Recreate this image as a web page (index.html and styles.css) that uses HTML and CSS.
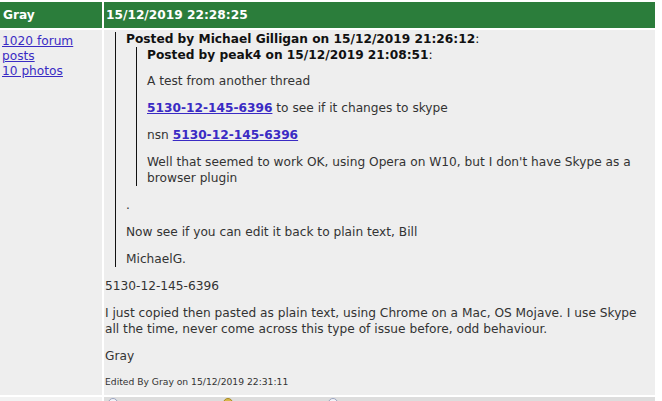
FILE: index.html
```html
<!DOCTYPE html>
<html lang="en">
<head>
    <meta charset="UTF-8">
    <title>Forum thread</title>
    <link rel="stylesheet" href="styles.css">
</head>
<body>
    <div class="thread">
        <div class="cell head">Gray</div>
        <div class="cell head">15/12/2019 22:28:25</div>

        <div class="cell author">
            <a href="#">1020 forum posts</a><br>
            <a href="#">10 photos</a>
        </div>
        <div class="cell post">
            <blockquote>
                <div class="quote-head">Posted by Michael Gilligan on 15/12/2019 21:26:12<span>:</span></div>
                <blockquote>
                    <div class="quote-head">Posted by peak4 on 15/12/2019 21:08:51<span>:</span></div>
                    <p>A test from another thread</p>
                    <p><a class="nsn" href="#">5130-12-145-6396</a> to see if it changes to skype</p>
                    <p>nsn <a class="nsn" href="#">5130-12-145-6396</a></p>
                    <p>Well that seemed to work OK, using Opera on W10, but I don't have Skype as a browser plugin</p>
                </blockquote>
                <p>.</p>
                <p>Now see if you can edit it back to plain text, Bill</p>
                <p>MichaelG.</p>
            </blockquote>
            <p>5130-12-145-6396</p>
            <p>I just copied then pasted as plain text, using Chrome on a Mac, OS Mojave. I use Skype all the time, never come across this type of issue before, odd behaviour.</p>
            <p>Gray</p>
            <p class="edited">Edited By Gray on 15/12/2019 22:31:11</p>
        </div>

        <div class="cell foot-left"></div>
        <div class="cell foot">
            <span class="dot"></span>
            <span class="dot gold"></span>
            <span class="dot last"></span>
        </div>
    </div>
</body>
</html>
```

FILE: styles.css
```css
body {
    margin: 0;
    padding-top: 2px;
    background: #fff;
    font-family: "DejaVu Sans", Verdana, sans-serif;
    font-size: 12.2px;
    line-height: 16px;
    color: #333;
}

.thread {
    display: grid;
    grid-template-columns: 102px 551px;
    grid-template-rows: 26px 365px 10px;
    column-gap: 2px;
    row-gap: 2px;
}

.cell {
    background: #eee;
}

.head {
    background: #2b7d3b;
    color: #fff;
    font-weight: bold;
    padding: 5px 2px 0 3px;
}

.head + .head {
    padding-left: 2px;
}

.author {
    padding: 4px 2px 0 2px;
    line-height: 15px;
}

.author a {
    color: #3a2bc4;
}

.post {
    padding: 0 2px 0 1px;
}

.post blockquote {
    margin: 2px 0 0 10px;
    padding-left: 10px;
    border-left: 1px solid #111;
}

.post blockquote blockquote {
    margin: 0 0 0 10px;
    padding-top: 1px;
}

.quote-head {
    font-weight: bold;
    color: #111;
    line-height: 15px;
}

.quote-head span {
    font-weight: normal;
}

.post p {
    margin: 11px 0 0 0;
}

.post blockquote blockquote p:first-of-type {
    margin-top: 10px;
}

.nsn {
    color: #3a2bc4;
    font-weight: bold;
}

.post p.edited {
    font-size: 9.2px;
    margin-top: 10px;
}

.foot-left {
    background: #f2f2f2;
}

.foot {
    background: #ddd;
    display: flex;
    padding-left: 4px;
}

.dot {
    width: 8px;
    height: 8px;
    margin-top: 1px;
    border-radius: 50%;
    border: 1px solid #9aa3c0;
    background: #f4f4f8;
}

.dot.gold {
    margin-left: 105px;
    border-color: #a88a20;
    background: #d9b84a;
}

.dot.last {
    margin-left: 95px;
}
```
